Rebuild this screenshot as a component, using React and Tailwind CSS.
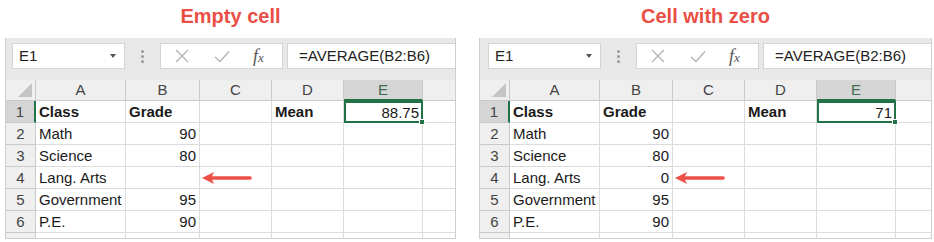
import React from "react";

const font = { fontFamily: '"Liberation Sans", Arial, sans-serif' };

const rows = [
  ["Class", "Grade", "", "Mean"],
  ["Math", "90"],
  ["Science", "80"],
  ["Lang. Arts", ""],
  ["Government", "95"],
  ["P.E.", "90"],
];

const Arrow = () => (
  <svg width="52" height="14" viewBox="0 0 52 14" className="block">
    <path d="M1 7 L13 1 L11 5.2 H49 a1.8 1.8 0 0 1 0 3.6 H11 L13 13 Z" fill="#ec5148" />
  </svg>
);

const FormulaBar = ({ nameLeft }) => (
  <div className="flex h-[42px] items-start bg-[#e8e8e8] pt-[5px]" style={{ paddingLeft: nameLeft }}>
    <div className="flex h-[26px] w-[113px] items-center justify-between border border-[#d4d4d4] bg-white pl-[6px] pr-[8px] text-[15px] text-[#222]">
      <span>E1</span>
      <span className="h-0 w-0 border-x-[3px] border-t-[4px] border-x-transparent border-t-[#555]" />
    </div>
    <div className="flex h-[26px] w-[35px] flex-col items-center justify-center gap-[2px]">
      <span className="h-[3px] w-[3px] rounded-full bg-[#9a9a9a]" />
      <span className="h-[3px] w-[3px] rounded-full bg-[#9a9a9a]" />
      <span className="h-[3px] w-[3px] rounded-full bg-[#9a9a9a]" />
    </div>
    <div className="flex h-[26px] w-[123px] items-center border border-[#d4d4d4] bg-white">
      <svg width="14" height="14" viewBox="0 0 14 14" className="ml-[14px]">
        <path d="M1 1 L13 13 M13 1 L1 13" stroke="#b5b5b5" strokeWidth="1.4" />
      </svg>
      <svg width="16" height="13" viewBox="0 0 16 13" className="ml-[25px]">
        <path d="M1 7 L6 11.5 L15 1.5" stroke="#b5b5b5" strokeWidth="1.4" fill="none" />
      </svg>
      <span
        className="ml-[23px] text-[18px] italic text-[#555]"
        style={{ fontFamily: '"Liberation Serif", "Times New Roman", serif' }}
      >
        f<span className="text-[13px]">x</span>
      </span>
    </div>
    <div className="ml-[4px] flex h-[26px] flex-1 items-center border border-r-0 border-[#d4d4d4] bg-white pl-[11px] text-[15px] text-[#222]">
      =AVERAGE(B2:B6)
    </div>
  </div>
);

const Panel = ({ colB, mean, langArts, nameLeft }) => {
  const cell = "border-r border-b border-[#dcdcdc] bg-white px-[3px] leading-[22px] text-[15px] text-[#1a1a1a] whitespace-nowrap";
  const head = "border-r border-b border-[#c9c9c9] bg-[#efefef] text-center leading-[20px] text-[15px] text-[#444]";
  return (
    <div className="w-full border-x border-b border-[#cfcfcf]" style={font}>
      <FormulaBar nameLeft={nameLeft} />
      <div
        className="grid grid-rows-[21px_22px_22px_22px_22px_22px_22px_5px]"
        style={{ gridTemplateColumns: `30px 90px ${colB}px 72px 72px 79px 1fr` }}
      >
        {/* header row */}
        <div className="relative border-r border-b border-[#c9c9c9] bg-[#efefef]">
          <span className="absolute right-[3px] bottom-[3px] h-0 w-0 border-b-[14px] border-l-[14px] border-b-[#c4c4c4] border-l-transparent" />
        </div>
        {["A", "B", "C", "D"].map((c) => (
          <div key={c} className={head}>{c}</div>
        ))}
        <div className="border-r border-b-2 border-b-[#217346] border-r-[#c9c9c9] bg-[#d5d5d5] text-center leading-[20px] text-[15px] text-[#3d6b50]">E</div>
        <div className="border-b border-[#c9c9c9] bg-[#efefef]" />

        {rows.map((r, i) => {
          const b = i === 3 ? langArts : r[1];
          return (
            <React.Fragment key={i}>
              <div
                className={`border-b text-center leading-[22px] text-[15px] text-[#444] ${
                  i === 0
                    ? "border-r-2 border-r-[#217346] border-b-[#c9c9c9] bg-[#d5d5d5]"
                    : "border-r border-[#c9c9c9] bg-[#efefef]"
                }`}
              >
                {i + 1}
              </div>
              <div className={`${cell} ${i === 0 ? "font-bold" : ""}`}>{r[0]}</div>
              <div className={`${cell} ${i === 0 ? "font-bold text-left" : "text-right"}`}>{b}</div>
              <div className={`${cell} relative overflow-visible`}>
                {i === 3 && (
                  <div className="absolute left-[1px] top-[4px] z-10">
                    <Arrow />
                  </div>
                )}
              </div>
              <div className={`${cell} ${i === 0 ? "font-bold" : ""}`}>{i === 0 ? "Mean" : ""}</div>
              {i === 0 ? (
                <div className="relative border-2 border-[#217346] bg-white pr-[2px] text-right leading-[19px] text-[15px] text-[#1a1a1a]">
                  {mean}
                  <span className="absolute -right-[4px] -bottom-[4px] h-[6px] w-[6px] border border-white bg-[#217346]" />
                </div>
              ) : (
                <div className={cell} />
              )}
              <div className="border-b border-[#dcdcdc] bg-white" />
            </React.Fragment>
          );
        })}
        <div className="border-r border-[#c9c9c9] bg-[#efefef]" />
        {[0, 1, 2, 3, 4].map((k) => (
          <div key={k} className="border-r border-[#dcdcdc] bg-white" />
        ))}
        <div className="bg-white" />
      </div>
    </div>
  );
};

export default function App() {
  return (
    <div className="h-[242px] w-[934px] bg-white" style={font}>
      <div className="flex pl-[5px] pr-[2px]">
        <div className="w-[451px]">
          <div className="flex h-[38px] items-center justify-center pb-[6px] text-[20px] font-bold text-[#ea4f46]">
            Empty cell
          </div>
          <Panel colB={74} mean="88.75" langArts="" nameLeft={6} />
        </div>
        <div className="ml-[23px] flex-1">
          <div className="flex h-[38px] items-center justify-center pb-[6px] text-[20px] font-bold text-[#ea4f46]">
            Cell with zero
          </div>
          <Panel colB={73} mean="71" langArts="0" nameLeft={8} />
        </div>
      </div>
    </div>
  );
}
